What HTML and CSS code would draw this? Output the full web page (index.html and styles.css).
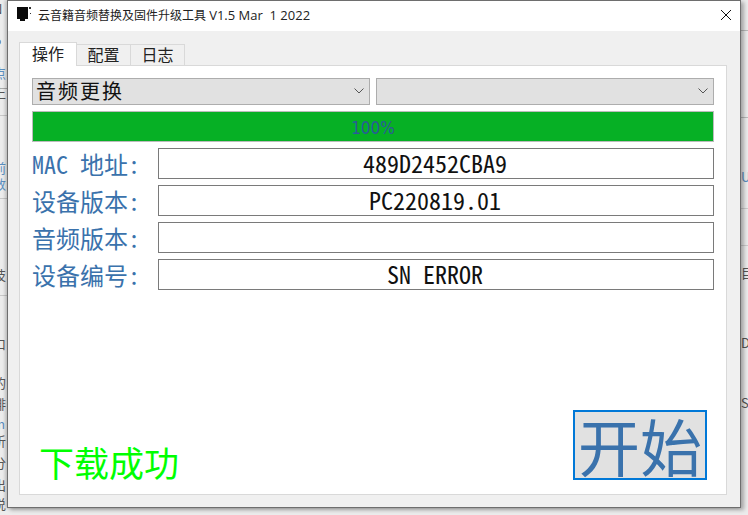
FILE: index.html
```html
<!DOCTYPE html>
<html lang="zh">
<head>
<meta charset="utf-8">
<title>云音籍音频替换及固件升级工具</title>
<link rel="stylesheet" href="styles.css">
</head>
<body>
<div class="behind behind-left">
  <span>N</span><span>P</span><span class="blue">点</span><span>上</span><span class="blue">前</span><span class="blue">数</span><span>技</span><span>口</span><span>的</span><span>排</span><span class="blue">m</span><span>析</span><span>分</span><span>出</span><span>说</span>
</div>
<div class="behind behind-right">
  <span class="blue">U</span><span>目</span><span>D</span><span>S</span>
</div>
<div class="window">
  <header class="titlebar">
    <svg class="app-icon" width="14" height="16" viewBox="0 0 14 16"><path d="M0 0h11v12H8v2H3v-2H0z" fill="#0a0a0a"/><path d="M12 0h2v2h-2zM13 6h1v1h-1z" fill="#333"/></svg>
    <span class="title">云音籍音频替换及固件升级工具 <span class="version">V1.5 Mar&nbsp; 1 2022</span></span>
    <svg class="close" width="12" height="12" viewBox="0 0 12 12"><path d="M1 1l10 10M11 1L1 11" stroke="#111" stroke-width="1" fill="none"/></svg>
  </header>
  <div class="client">
    <nav class="tabs">
      <div class="tab active">操作</div>
      <div class="tab">配置</div>
      <div class="tab">日志</div>
    </nav>
    <main class="pane">
      <div class="selects">
        <div class="select"><span>音频更换</span><svg width="10" height="6" viewBox="0 0 10 6"><path d="M.5.5L5 5 9.500.5" stroke="#555" fill="none"/></svg></div>
        <div class="select"><span></span><svg width="10" height="6" viewBox="0 0 10 6"><path d="M.5.5L5 5 9.500.5" stroke="#555" fill="none"/></svg></div>
      </div>
      <div class="progress">100%</div>
      <div class="row"><label>MAC 地址:</label><div class="field">489D2452CBA9</div></div>
      <div class="row"><label>设备版本:</label><div class="field">PC220819.01</div></div>
      <div class="row"><label>音频版本:</label><div class="field"></div></div>
      <div class="row"><label>设备编号:</label><div class="field">SN ERROR</div></div>
      <div class="footer">
        <div class="status">下载成功</div>
        <button class="start">开始</button>
      </div>
    </main>
  </div>
</div>
</body>
</html>
```
FILE: styles.css
```css
* { box-sizing: border-box; }
html, body { margin: 0; height: 100%; }
body {
  position: relative;
  width: 748px; height: 515px; overflow: hidden;
  background: #ececec;
  padding: 0 7px 7px 7px;
  font-family: "Noto Sans CJK SC", "Liberation Sans", sans-serif;
}
.behind { position: absolute; top: 0; height: 515px; font-size: 13px; line-height: 14px; color: #555; }
.behind span { position: absolute; left: 0; }
.behind .blue { color: #5b8fc0; }
.behind-left {
  left: -7px; width: 14px;
  background:
    linear-gradient(#aaa, #aaa) 0 88px / 100% 1px no-repeat,
    linear-gradient(#c8c8c8, #c8c8c8) 0 115px / 100% 1px no-repeat,
    linear-gradient(#c8c8c8, #c8c8c8) 0 198px / 100% 1px no-repeat,
    linear-gradient(#c8c8c8, #c8c8c8) 0 295px / 100% 1px no-repeat;
}
.behind-left span:nth-child(1) { top: 2px; }
.behind-left span:nth-child(2) { top: 37px; }
.behind-left span:nth-child(3) { top: 66px; }
.behind-left span:nth-child(4) { top: 86px; }
.behind-left span:nth-child(5) { top: 161px; }
.behind-left span:nth-child(6) { top: 177px; }
.behind-left span:nth-child(7) { top: 268px; }
.behind-left span:nth-child(8) { top: 337px; }
.behind-left span:nth-child(9) { top: 376px; }
.behind-left span:nth-child(10) { top: 397px; }
.behind-left span:nth-child(11) { top: 417px; }
.behind-left span:nth-child(12) { top: 434px; }
.behind-left span:nth-child(13) { top: 456px; }
.behind-left span:nth-child(14) { top: 478px; }
.behind-left span:nth-child(15) { top: 497px; }
.behind-right {
  left: 741px; width: 14px;
  background:
    linear-gradient(#bbb, #bbb) 0 30px / 100% 1px no-repeat,
    linear-gradient(#bbb, #bbb) 0 117px / 100% 1px no-repeat,
    linear-gradient(#ccc, #ccc) 0 208px / 100% 1px no-repeat,
    linear-gradient(#ccc, #ccc) 0 245px / 100% 1px no-repeat;
}
.behind-right span:nth-child(1) { top: 170px; }
.behind-right span:nth-child(2) { top: 266px; }
.behind-right span:nth-child(3) { top: 336px; }
.behind-right span:nth-child(4) { top: 396px; }
.window {
  position: relative;
  width: 734px; height: 508px;
  border: 1px solid #6e6e6e;
  background: #f0f0f0;
  display: flex; flex-direction: column;
  box-shadow: 3px 2px 4px rgba(0,0,0,.3), -2px 0 3px rgba(0,0,0,.2);
}
.titlebar {
  height: 30px; background: #fff;
  display: flex; align-items: center;
  padding: 0 8px 2px 9px;
  flex: none;
}
.app-icon { flex: none; }
.title { margin-left: 7px; font-size: 12px; color: #222; font-family: "Open Sans", "Noto Sans CJK SC", sans-serif; white-space: nowrap; }
.version { font-size: 13px; }
.close { margin-left: auto; }
.client { flex: 1; padding: 11px 13px 12px 11px; display: flex; flex-direction: column; min-height: 0; }
.tabs { display: flex; height: 23px; flex: none; align-items: flex-end; }
.tab {
  height: 21px; width: 54px;
  font-size: 16px; line-height: 19px; text-align: center; color: #222;
  border: 1px solid #d9d9d9; border-bottom: none; border-left: none;
  background: #f0f0f0;
}
.tab.active {
  height: 24px; width: 58px; background: #fff; border-left: 1px solid #d9d9d9; line-height: 21px;
  position: relative; z-index: 1; margin-bottom: -1px;
}
.pane {
  flex: 1; background: #fff; border: 1px solid #d9d9d9;
  padding: 12px 0 0 12px;
  display: flex; flex-direction: column; min-height: 0;
}
.selects { display: flex; gap: 6px; width: 682px; flex: none; }
.select {
  flex: 1; height: 27px; background: #e1e1e1; border: 1px solid #adadad;
  display: flex; align-items: center; justify-content: space-between;
  padding: 0 5px 2px 3px; font-size: 20px; letter-spacing: 2px; color: #111;
}
.progress {
  margin-top: 6px; width: 682px; height: 31px; flex: none;
  background: #06b025; border: 1px solid #bcbcbc;
  text-align: center; line-height: 32px; font-size: 17px; color: #2a5a9a;
  font-family: "DejaVu Sans Condensed", "Liberation Sans", sans-serif;
}
.row { display: flex; width: 682px; height: 31px; margin-top: 6px; align-items: center; flex: none; }
.row label {
  width: 126px; flex: none; font-size: 24px; line-height: 29px; color: #3a72ac; white-space: nowrap;
  font-family: "Noto Sans Mono CJK SC", "Noto Sans CJK SC", monospace;
}
.field {
  flex: 1; height: 31px; border: 1px solid #7a7a7a; background: #fff;
  padding-right: 2px;
  text-align: center; font-size: 24px; line-height: 27px; color: #111;
  font-family: "Noto Sans Mono CJK SC", "Liberation Mono", monospace;
}
.footer { flex: 1; display: flex; justify-content: space-between; align-items: flex-end; padding: 0 7px 14px 7px; width: 682px; }
.status { font-size: 35px; line-height: 40px; color: #00ff00; margin-bottom: -2px; }
.start {
  width: 134px; height: 70px; padding: 0; background: #e1e1e1; border: 2px solid #0078d7;
  font-family: "Noto Sans CJK SC", sans-serif; font-size: 62px; line-height: 62px; color: #3a72ac;
}
```
